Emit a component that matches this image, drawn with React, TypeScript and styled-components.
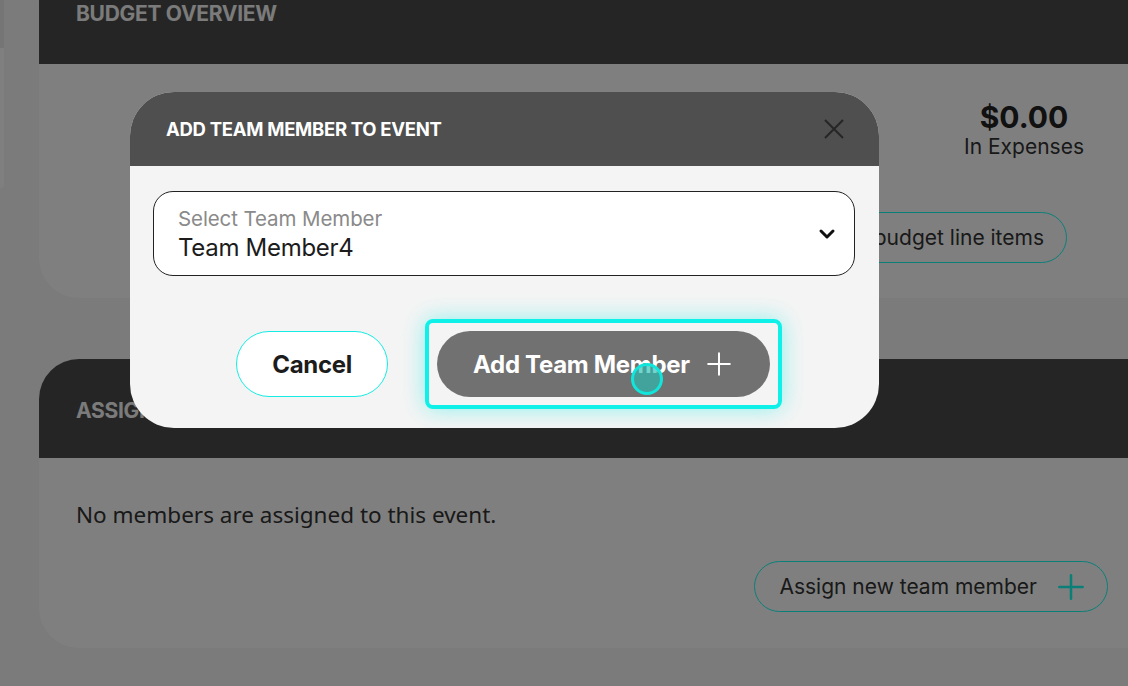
import React from "react";
import styled, { createGlobalStyle } from "styled-components";

const GlobalStyle = createGlobalStyle`
  html, body {
    margin: 0;
    padding: 0;
    overflow: hidden;
    background: #f6f6f6;
    font-family: Inter, "Noto Sans", sans-serif;
  }
`;

const Page = styled.div`
  position: relative;
  width: 1128px;
  height: 686px;
  overflow: hidden;
  display: flex;
  background: #f6f6f6;
`;

const SideRail = styled.div`
  flex: 0 0 4px;
  height: 140px;
  margin-right: 35px;
  background: #fefefe;
  border-bottom-right-radius: 6px;
  border-top: 48px solid #ebebeb;
`;

const Content = styled.div`
  flex: 0 0 1109px;
  display: flex;
  flex-direction: column;
  gap: 61px;
  margin-top: -38px;
`;

const Card = styled.section<{ $height: number }>`
  height: ${(p) => p.$height}px;
  background: #ffffff;
  border-radius: 40px 0 0 40px;
  overflow: hidden;
  display: flex;
  flex-direction: column;
`;

const CardHeader = styled.div<{ $height: number }>`
  flex: 0 0 ${(p) => p.$height}px;
  background: #4a4a4a;
  padding: 38px 37px 0;
  box-sizing: border-box;
`;

const CardTitle = styled.h2`
  margin: 0;
  font-size: 21px;
  font-weight: 700;
  color: #f6f6f6;
  letter-spacing: -0.3px;
  line-height: 28px;
`;

const BudgetBody = styled.div`
  display: flex;
  justify-content: flex-end;
  padding: 36px 81px 0 0;
`;

const Totals = styled.div`
  display: flex;
  flex-direction: column;
  align-items: flex-end;
`;

const Amount = styled.div`
  width: 160px;
  text-align: center;
  margin-right: -37px;
`;

const AmountValue = styled.div`
  font-size: 30px;
  font-weight: 700;
  color: #222;
  line-height: 34px;
`;

const AmountLabel = styled.div`
  font-size: 21px;
  color: #333;
  line-height: 26px;
`;

const BudgetAction = styled.div`
  margin-top: 52px;
`;

const OutlineButton = styled.button`
  display: inline-flex;
  align-items: center;
  gap: 20px;
  height: 51px;
  padding: 0 22px 0 24px;
  border: 1.5px solid #14fef0;
  border-radius: 999px;
  background: transparent;
  font-family: Inter, sans-serif;
  font-size: 21px;
  color: #333;
`;

const MembersBody = styled.div`
  display: flex;
  flex-direction: column;
  padding: 42px 40px 0 37px;
`;

const EmptyText = styled.p`
  margin: 0;
  font-family: "Noto Sans", sans-serif;
  font-size: 22.5px;
  color: #333;
  line-height: 30px;
`;

const ActionRow = styled.div`
  display: flex;
  justify-content: flex-end;
  margin-top: 31px;
`;

const Overlay = styled.div`
  position: absolute;
  inset: 0;
  background: rgba(0, 0, 0, 0.5);
`;

const Modal = styled.div`
  position: absolute;
  left: 130px;
  top: 92px;
  width: 749px;
  border-radius: 44px;
  overflow: hidden;
  background: #f4f4f4;
`;

const ModalHeader = styled.div`
  height: 74px;
  background: #4f4f4f;
  display: flex;
  align-items: center;
  justify-content: space-between;
  padding: 0 34px 0 36px;
`;

const ModalTitle = styled.h3`
  margin: 0;
  font-size: 18.5px;
  font-weight: 700;
  color: #ffffff;
  letter-spacing: -0.3px;
`;

const CloseButton = styled.button`
  border: 0;
  background: none;
  padding: 0;
  display: flex;
`;

const ModalBody = styled.div`
  padding: 25px 24px 19px 23px;
`;

const SelectBox = styled.div`
  height: 85px;
  box-sizing: border-box;
  border: 1px solid #222;
  border-radius: 20px;
  background: #fff;
  display: flex;
  align-items: center;
  justify-content: space-between;
  padding: 0 18px 0 24px;
`;

const SelectText = styled.div`
  display: flex;
  flex-direction: column;
`;

const SelectLabel = styled.span`
  font-size: 20.5px;
  color: #8a8a8a;
  line-height: 27px;
  letter-spacing: -0.1px;
`;

const SelectValue = styled.span`
  font-size: 24px;
  color: #1c1c1c;
  line-height: 31px;
  letter-spacing: -0.3px;
`;

const ButtonRow = styled.div`
  display: flex;
  justify-content: center;
  align-items: center;
  gap: 37px;
  margin-top: 43px;
  padding-left: 10px;
`;

const PillButton = styled.button<{ $primary?: boolean }>`
  position: relative;
  height: 66px;
  border-radius: 999px;
  display: inline-flex;
  align-items: center;
  gap: 16px;
  font-family: Inter, sans-serif;
  font-size: 24px;
  font-weight: 700;
  letter-spacing: -0.3px;
  padding: ${(p) => (p.$primary ? "0 38px 0 36px" : "0 35px")};
  border: ${(p) => (p.$primary ? "0" : "1px solid #14ece4")};
  background: ${(p) => (p.$primary ? "#717171" : "#ffffff")};
  color: ${(p) => (p.$primary ? "#ffffff" : "#1c1c1c")};
`;

const FocusRing = styled.span`
  display: inline-flex;
  padding: 8px;
  border: 4px solid #0ef0e8;
  border-radius: 8px;
  box-shadow: 0 0 22px rgba(14, 240, 232, 0.45);
`;

const ClickMarker = styled.span`
  position: absolute;
  left: 194px;
  top: 32px;
  width: 26px;
  height: 26px;
  border-radius: 50%;
  border: 3px solid #10e6dc;
  background: rgba(40, 190, 180, 0.65);
`;

function PlusIcon({ size, color, width }: { size: number; color: string; width: number }) {
  return (
    <svg width={size} height={size} viewBox="0 0 24 24" fill="none" stroke={color} strokeWidth={width} strokeLinecap="round">
      <path d="M12 2v20M2 12h20" />
    </svg>
  );
}

export default function App() {
  return (
    <>
      <GlobalStyle />
      <Page>
        <SideRail />
        <Content>
          <Card $height={336}>
            <CardHeader $height={102}>
              <CardTitle>BUDGET OVERVIEW</CardTitle>
            </CardHeader>
            <BudgetBody>
              <Totals>
                <Amount>
                  <AmountValue>$0.00</AmountValue>
                  <AmountLabel>In Expenses</AmountLabel>
                </Amount>
                <BudgetAction>
                  <OutlineButton>View budget line items</OutlineButton>
                </BudgetAction>
              </Totals>
            </BudgetBody>
          </Card>
          <Card $height={289}>
            <CardHeader $height={99}>
              <CardTitle>ASSIGNED TEAM MEMBERS</CardTitle>
            </CardHeader>
            <MembersBody>
              <EmptyText>No members are assigned to this event.</EmptyText>
              <ActionRow>
                <OutlineButton>
                  Assign new team member
                  <PlusIcon size={28} color="#14fef0" width={2.2} />
                </OutlineButton>
              </ActionRow>
            </MembersBody>
          </Card>
        </Content>
        <Overlay />
        <Modal>
          <ModalHeader>
            <ModalTitle>ADD TEAM MEMBER TO EVENT</ModalTitle>
            <CloseButton>
              <svg width="22" height="22" viewBox="0 0 22 22" fill="none" stroke="#262626" strokeWidth="2">
                <path d="M2 2l18 18M20 2L2 20" />
              </svg>
            </CloseButton>
          </ModalHeader>
          <ModalBody>
            <SelectBox>
              <SelectText>
                <SelectLabel>Select Team Member</SelectLabel>
                <SelectValue>Team Member4</SelectValue>
              </SelectText>
              <svg width="18" height="12" viewBox="0 0 18 12" fill="none" stroke="#111" strokeWidth="3" strokeLinecap="round" strokeLinejoin="round">
                <path d="M3 3l6 6 6-6" />
              </svg>
            </SelectBox>
            <ButtonRow>
              <PillButton>Cancel</PillButton>
              <FocusRing>
                <PillButton $primary>
                  Add Team Member
                  <PlusIcon size={26} color="#ffffff" width={1.8} />
                  <ClickMarker />
                </PillButton>
              </FocusRing>
            </ButtonRow>
          </ModalBody>
        </Modal>
      </Page>
    </>
  );
}
